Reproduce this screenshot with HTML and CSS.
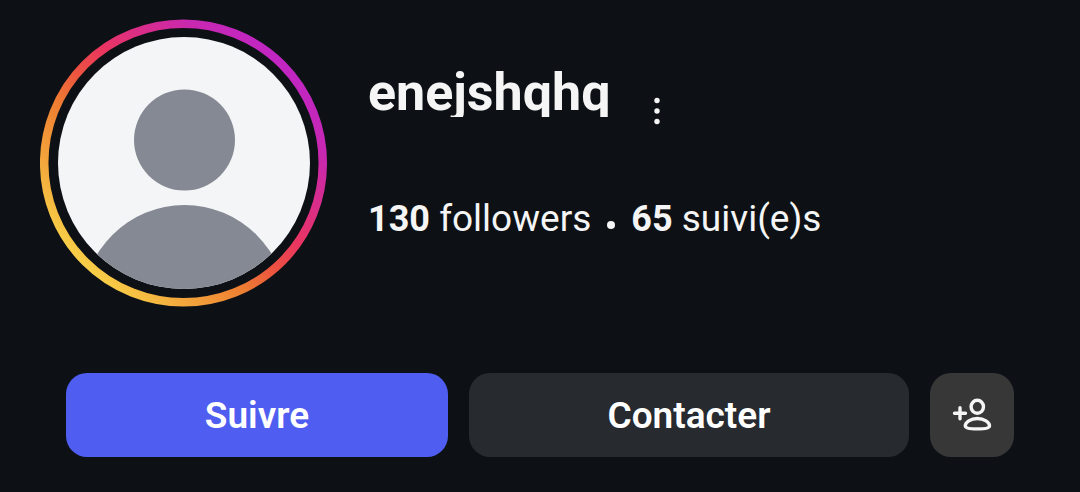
FILE: index.html
```html
<!DOCTYPE html>
<html lang="fr">
<head>
    <meta charset="UTF-8">
    <meta name="viewport" content="width=device-width, initial-scale=1.0">
    <title>enejshqhq</title>
    <link rel="stylesheet" href="styles.css">
</head>
<body>
    <main class="profile">
        <header class="profile-header">
            <svg class="avatar" viewBox="0 0 288 288" role="img" aria-label="Photo de profil">
                <defs>
                    <linearGradient id="ring" gradientUnits="userSpaceOnUse" x1="42" y1="246" x2="246" y2="42">
                        <stop offset="0" stop-color="#f8d048"/>
                        <stop offset="0.16" stop-color="#f3a63c"/>
                        <stop offset="0.34" stop-color="#ee7c32"/>
                        <stop offset="0.46" stop-color="#ec5340"/>
                        <stop offset="0.58" stop-color="#ea3560"/>
                        <stop offset="0.7" stop-color="#dc2e84"/>
                        <stop offset="0.86" stop-color="#c828b0"/>
                        <stop offset="1" stop-color="#c026c4"/>
                    </linearGradient>
                    <clipPath id="photo">
                        <circle cx="144" cy="144" r="126"/>
                    </clipPath>
                </defs>
                <circle cx="143.5" cy="144" r="139.3" fill="none" stroke="url(#ring)" stroke-width="8.5"/>
                <g clip-path="url(#photo)">
                    <rect width="288" height="288" fill="#f3f5f7"/>
                    <circle cx="144.5" cy="121" r="50.5" fill="#858993"/>
                    <circle cx="144.5" cy="288" r="102" fill="#858993"/>
                </g>
            </svg>
            <div class="profile-info">
                <div class="name-row">
                    <h1 class="username">enejshqhq</h1>
                    <button type="button" class="menu-button" aria-label="Options">
                        <svg width="8" height="28" viewBox="0 0 8 28" fill="#f5f5f5">
                            <circle cx="4" cy="3.5" r="2.7"/>
                            <circle cx="4" cy="14" r="2.7"/>
                            <circle cx="4" cy="24.5" r="2.7"/>
                        </svg>
                    </button>
                </div>
                <p class="stats">
                    <span><strong>130</strong> followers</span>
                    <span class="dot"></span>
                    <span><strong>65</strong> suivi(e)s</span>
                </p>
            </div>
        </header>
        <div class="actions">
            <button type="button" class="btn btn-follow">Suivre</button>
            <button type="button" class="btn btn-contact">Contacter</button>
            <button type="button" class="btn btn-add" aria-label="Suggestions">
                <svg width="40" height="36" viewBox="0 0 40 36" fill="none" stroke="#f5f5f5" stroke-width="3.4" stroke-linecap="round">
                    <path d="M2.5 16.2H13.5M8 10.7V21.7"/>
                    <ellipse cx="25.3" cy="9.8" rx="6.2" ry="6.5"/>
                    <path d="M25.3 21.5C18.5 21.5 13.3 25.5 13.3 28.7C13.3 31 17 31.9 25.3 31.9S37.5 31 37.5 28.7C37.5 25.5 32.3 21.5 25.3 21.5Z"/>
                </svg>
            </button>
        </div>
    </main>
</body>
</html>
```

FILE: styles.css
```css
body {
    margin: 0;
    background-color: #0d1116;
    color: #f5f5f5;
    font-family: Roboto, sans-serif;
}

.profile {
    padding-top: 19px;
}

.profile-header {
    display: flex;
    gap: 40px;
    padding: 0 40px;
}

.avatar {
    flex: none;
    width: 288px;
    height: 288px;
}

.profile-info {
    padding-top: 50px;
}

.name-row {
    display: flex;
    align-items: flex-start;
    gap: 37px;
}

.username {
    margin: 0;
    font-size: 52px;
    line-height: 48px;
    font-weight: 700;
    overflow: hidden;
}

.menu-button {
    display: flex;
    margin: 0;
    padding: 28px 6px 0;
    border: none;
    background: none;
    cursor: pointer;
}

.stats {
    display: flex;
    align-items: center;
    gap: 16px;
    margin: 72px 0 0;
    font-size: 37px;
    line-height: 44px;
}

.stats strong {
    font-size: 36px;
}

.dot {
    width: 8px;
    height: 8px;
    margin-top: 12px;
    border-radius: 50%;
    background-color: #f5f5f5;
}

.actions {
    display: flex;
    gap: 21px;
    padding: 66px 66px 35px;
}

.btn {
    display: flex;
    justify-content: center;
    align-items: center;
    height: 84px;
    padding: 0;
    border: none;
    border-radius: 21px;
    color: #fff;
    font-family: inherit;
    font-size: 37px;
    font-weight: 600;
    cursor: pointer;
}

.btn-follow {
    flex: 382 1 0;
    background-color: #4f5df0;
}

.btn-contact {
    flex: 440 1 0;
    background-color: #272a2f;
}

.btn-add {
    flex: none;
    width: 84px;
    background-color: #373737;
}
```
